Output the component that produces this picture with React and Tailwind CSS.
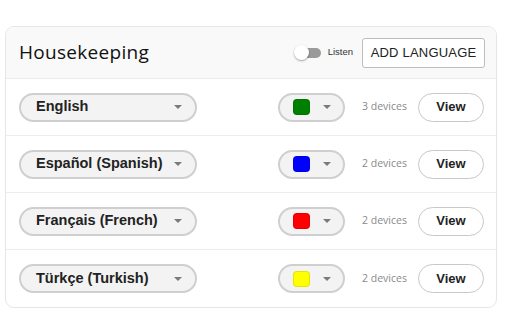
const languages = [
  { name: 'English', color: '#008000', devices: 3 },
  { name: 'Español (Spanish)', color: '#0000ff', devices: 2 },
  { name: 'Français (French)', color: '#ff0000', devices: 2 },
  { name: 'Türkçe (Turkish)', color: '#ffff00', devices: 2 },
]

function Caret() {
  return (
    <svg width="8" height="4" viewBox="0 0 8 4" className="shrink-0">
      <path d="M0 0 L8 0 L4 4 Z" fill="#7a7a7a" />
    </svg>
  )
}

function LanguageRow({ lang, last }) {
  return (
    <div className={`flex items-center h-[57px] pl-[13px] pr-[12px] ${last ? '' : 'border-b border-[#ececec]'}`}>
      {/* language select */}
      <div className="flex items-center justify-between w-[178px] h-[29px] rounded-full border-2 border-[#cfcfcf] bg-[#f3f3f3] pl-[15px] pr-[13px]">
        <span className="font-['Liberation_Sans',Arial,sans-serif] font-bold text-[14.5px] text-[#222]">{lang.name}</span>
        <Caret />
      </div>

      <div className="ml-auto flex items-center">
        {/* colour select */}
        <div className="flex items-center w-[67px] h-[29px] rounded-full border-2 border-[#cfcfcf] bg-[#f3f3f3] pl-[13px]">
          <span
            className="w-[17px] h-[16px] rounded-[4px] border border-black/10"
            style={{ backgroundColor: lang.color }}
          />
          <span className="ml-[13px]"><Caret /></span>
        </div>

        <span className="ml-[17px] w-[45px] font-['Open_Sans',sans-serif] text-[10.5px] text-[#8a8a8a] whitespace-nowrap">
          {lang.devices} devices
        </span>

        <button className="ml-[11px] w-[66px] h-[29px] rounded-full border border-[#c8c8c8] bg-white font-['Liberation_Sans',Arial,sans-serif] font-bold text-[13px] text-[#222]">
          View
        </button>
      </div>
    </div>
  )
}

export default function App() {
  return (
    <div className="bg-white min-h-[317px] pt-[26px] pl-[5px]">
      <div className="w-[492px] rounded-[9px] border border-[#e6e6e6] overflow-hidden bg-white">
        {/* header */}
        <div className="flex items-center h-[52px] bg-[#f9f9f9] border-b border-[#ececec] pl-[13px] pr-[11px]">
          <h1 className="font-['Open_Sans',sans-serif] text-[19px] text-[#111] tracking-[0.3px]">Housekeeping</h1>
          <div className="ml-auto flex items-center">
            <div className="relative w-[27px] h-[15px] flex items-center">
              <div className="absolute left-[6px] w-[21px] h-[10px] rounded-full bg-[#9a9a9a]" />
              <div className="absolute left-0 w-[15px] h-[15px] rounded-full bg-white shadow-[0_1px_2px_rgba(0,0,0,0.35)]" />
            </div>
            <span className="ml-[7px] font-['Liberation_Sans',Arial,sans-serif] text-[9.5px] text-[#333]">Listen</span>
            <button className="ml-[9px] w-[123px] h-[30px] rounded-[3px] border border-[#bdbdbd] bg-white font-['Liberation_Sans',Arial,sans-serif] text-[13px] text-[#222] tracking-[0.2px]">
              ADD LANGUAGE
            </button>
          </div>
        </div>

        {languages.map((lang, i) => (
          <LanguageRow key={lang.name} lang={lang} last={i === languages.length - 1} />
        ))}
      </div>
    </div>
  )
}
